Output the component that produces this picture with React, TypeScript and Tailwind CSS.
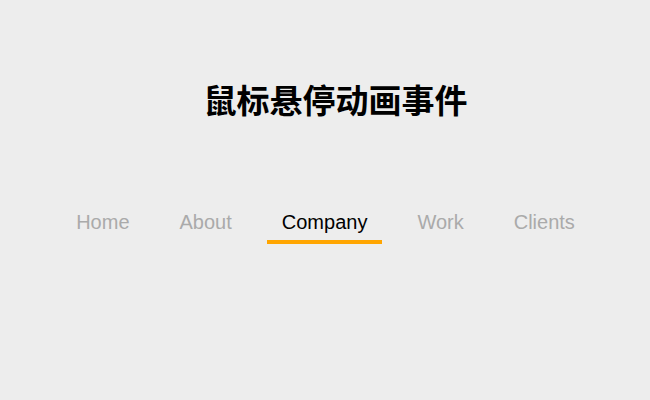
import React from "react";

const items = ["Home", "About", "Company", "Work", "Clients"];

export default function App() {
  return (
    <div className="w-[650px] h-[400px] bg-[#ededed] flex flex-col items-center" style={{ fontFamily: '"Liberation Sans", Arial, "Noto Sans CJK SC", sans-serif' }}>
      <h1 className="mt-[78px] ml-[21px] text-[33px] leading-[48px] font-bold text-black" style={{ fontFamily: '"Liberation Sans", "Noto Sans CJK SC", sans-serif' }}>
        鼠标悬停动画事件
      </h1>
      <ul className="mt-[81px] ml-[1px] flex gap-[20px]">
        {items.map((it) => (
          <li
            key={it}
            className={
              it === "Company"
                ? "px-[15px] pb-[3px] text-[20px] leading-[30px] text-black border-b-4 border-[#ffa500]"
                : "px-[15px] pb-[3px] text-[20px] leading-[30px] text-[#aaaaaa] border-b-4 border-transparent"
            }
          >
            {it}
          </li>
        ))}
      </ul>
    </div>
  );
}
